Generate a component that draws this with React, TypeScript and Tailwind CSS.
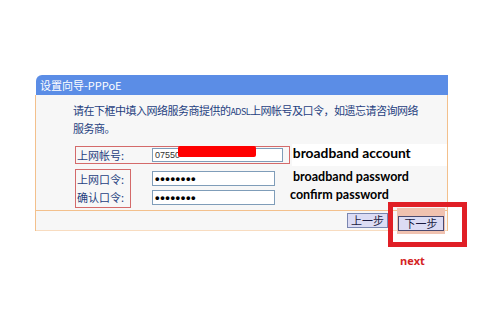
import React from "react";

const cjk = { fontFamily: '"Noto Sans CJK SC", "Liberation Sans", sans-serif' };
const en = { fontFamily: 'Lato, "Open Sans", "Liberation Sans", sans-serif' };

function Input({ w, h, children }: { w: string; h: string; children?: React.ReactNode }) {
  return (
    <div
      className={`${w} ${h} bg-white border border-[#7f9db9] flex items-center pl-[2px] text-[9px] leading-none text-[#333]`}
      style={{ fontFamily: '"Liberation Sans", sans-serif' }}
    >
      {children}
    </div>
  );
}

function Dots() {
  return <span className="text-[13px] font-bold tracking-[0.6px] text-black">••••••••</span>;
}

export default function App() {
  return (
    <div className="relative w-[486px] h-[315px] bg-white overflow-hidden pt-[75px] pl-[35px]">
      <div className="w-[413px]">
        {/* title bar */}
        <div
          className="h-[20px] ml-[1px] bg-[#5b8de6] rounded-tl-[6px] flex items-center pl-[4px] text-white text-[11px] leading-none"
          style={cjk}
        >
          设置向导-PPPoE
        </div>
        {/* body */}
        <div className="border-x border-[#f3c08c] bg-[#f7f7f7]">
          <div className="h-[116px] border-b border-[#f3c08c] pt-[7px]" style={cjk}>
            <p className="pl-[37px] text-[11px] leading-[16px] tracking-[-0.5px] text-[#1f3f7f] whitespace-nowrap">
              请在下框中填入网络服务商提供的<span className="text-[9px] tracking-[-0.6px]">ADSL</span>上网帐号及口令，如遗忘请咨询网络
              <br />
              服务商。
            </p>
            {/* row 1 */}
            <div className="mt-[8px] ml-[39px] flex items-center">
              <div className="w-[216px] h-[18px] border border-[#d46a6a] flex items-center pl-[1px]">
                <span className="w-[75px] text-[11px] leading-none text-[#1f3f7f]">上网帐号:</span>
                <Input w="w-[131px]" h="h-[14px]">07550</Input>
              </div>
              <span
                className="ml-[2px] h-[22px] w-[156px] bg-white flex items-center pl-[1px] pb-[5px] text-[13.8px] font-bold text-black leading-none"
                style={en}
              >
                broadband account
              </span>
            </div>
            {/* row 2 */}
            <div className="mt-[1px] ml-[39px] flex">
              <div className="mt-[2px] w-[56px] h-[39px] border border-[#d46a6a] flex flex-col justify-around pl-[1px] text-[11px] leading-none text-[#1f3f7f]">
                <span>上网口令:</span>
                <span>确认口令:</span>
              </div>
              <div className="ml-[21px] pt-[4px] flex flex-col gap-[4px]">
                <Input w="w-[123px]" h="h-[15px]">
                  <Dots />
                </Input>
                <Input w="w-[123px]" h="h-[15px]">
                  <Dots />
                </Input>
              </div>
              <div className="ml-[15px] flex flex-col font-bold text-black" style={en}>
                <span className="pl-[3px] text-[12.5px] leading-[19px]">broadband password</span>
                <span className="text-[12.5px] leading-[17px]">confirm password</span>
              </div>
            </div>
          </div>
          {/* footer */}
          <div className="h-[20px] border-b border-[#f8dcc0] flex items-center justify-end pr-[2px] gap-[9px]" style={cjk}>
            <button className="w-[41px] h-[15px] bg-[#dcdcf4] border border-[#7a86b0] text-[11px] leading-none text-[#1a1a40]">
              上一步
            </button>
            <div className="p-[1px] bg-[#f0c2b0]">
              <button className="w-[46px] h-[15px] bg-[#dcdcf4] border border-[#4a4a70] text-[11px] leading-none text-[#1a1a40]">
                下一步
              </button>
            </div>
          </div>
        </div>
      </div>

      {/* annotations */}
      <div className="absolute left-[178px] top-[146px] w-[78px] h-[11px] bg-[#ff0000] rounded-[2px]" />
      <div className="absolute left-[388px] top-[202px] w-[79px] h-[45px] border-[5px] border-[#e01f26]" />
      <div
        className="absolute left-[400px] top-[253px] text-[11px] font-bold text-[#d42424]"
        style={{ fontFamily: '"Open Sans", "Liberation Sans", sans-serif' }}
      >
        next
      </div>
    </div>
  );
}
